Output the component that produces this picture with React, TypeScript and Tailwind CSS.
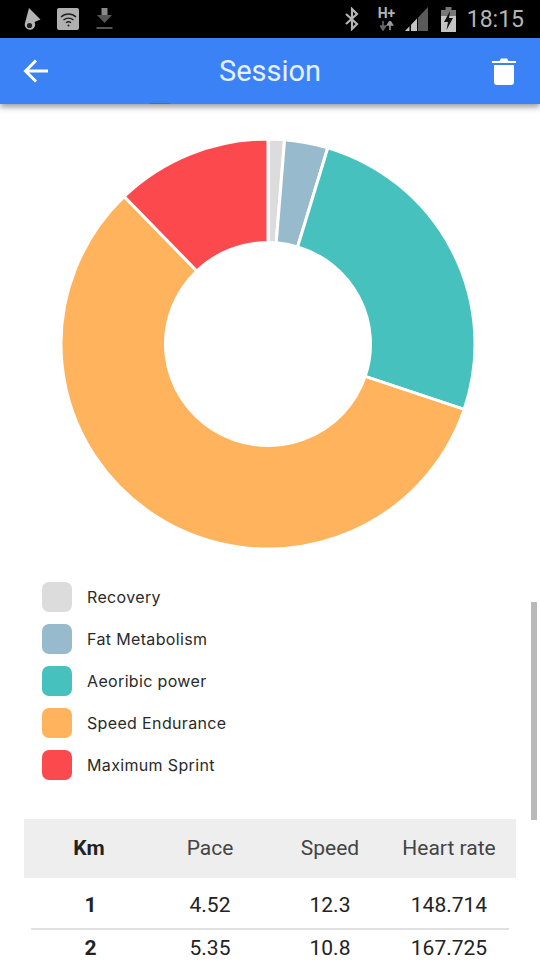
import React from 'react';

const CX = 207;
const CY = 207;
const OUTER = 207;
const INNER = 102.5;

const zones = [
  { name: 'Recovery', color: '#dcdcdc', from: 0, to: 4.6 },
  { name: 'Fat Metabolism', color: '#98bacd', from: 4.6, to: 16.8 },
  { name: 'Aeoribic power', color: '#47c1be', from: 16.8, to: 108.6 },
  { name: 'Speed Endurance', color: '#ffb35c', from: 108.6, to: 316 },
  { name: 'Maximum Sprint', color: '#fc494e', from: 316, to: 360 },
];

const laps = [
  { km: '1', pace: '4.52', speed: '12.3', heart: '148.714' },
  { km: '2', pace: '5.35', speed: '10.8', heart: '167.725' },
];

const point = (r: number, deg: number) => {
  const a = (deg * Math.PI) / 180;
  return `${CX + r * Math.sin(a)} ${CY - r * Math.cos(a)}`;
};

const slicePath = (from: number, to: number) => {
  const large = to - from > 180 ? 1 : 0;
  return `M${point(INNER, from)} L${point(OUTER, from)} A${OUTER} ${OUTER} 0 ${large} 1 ${point(OUTER, to)} L${point(INNER, to)} A${INNER} ${INNER} 0 ${large} 0 ${point(INNER, from)} Z`;
};

const StatusBar: React.FC = () => (
  <div className="h-[38px] bg-black flex items-center pl-[24px] pr-[16px] shrink-0">
    <svg width="17" height="23" viewBox="0 0 17 23" className="mr-[16px]">
      <path d="M5 0 L16.5 11.5 L10.5 14 A5.2 5.2 0 1 1 1 15 Z" fill="#b5b5b5" />
      <circle cx="5.5" cy="17.5" r="2.6" fill="#222" />
    </svg>
    <div className="w-[22px] h-[22px] bg-[#b0b0b0] rounded-[2px] mr-[17px] flex items-center justify-center">
      <svg width="17" height="15" viewBox="0 0 17 15" fill="none" stroke="#222" strokeWidth="1.4">
        <path d="M1 5 A11 11 0 0 1 16 5" />
        <path d="M3.5 8 A7.5 7.5 0 0 1 13.5 8" />
        <path d="M6 10.8 A4 4 0 0 1 11 10.8" />
        <circle cx="8.5" cy="13.5" r="1" fill="#222" stroke="none" />
      </svg>
    </div>
    <svg width="17" height="22" viewBox="0 0 17 22">
      <path d="M5.5 0 H11.5 V7 H5.5 Z" fill="#8a8a8a" />
      <path d="M1 7 H16 L8.5 15 Z" fill="#555" />
      <rect x="0.5" y="19" width="16" height="2" fill="#555" />
    </svg>
    <div className="flex-1" />
    <svg width="16" height="24" viewBox="0 0 16 24" fill="none" stroke="#b5b5b5" strokeWidth="2.2" className="mr-[18px]">
      <path d="M2 7 L13 17 L8 22 V2 L13 7 L2 17" />
    </svg>
    <div className="relative w-[19px] h-[26px] mr-[8px]">
      <span className="absolute left-0 top-[-1px] text-[14px] leading-[16px] font-bold text-[#b5b5b5] font-['Roboto',sans-serif]">H+</span>
      <svg width="14" height="10" viewBox="0 0 14 10" className="absolute left-[2px] top-[15px]">
        <path d="M3 0 V6 M0.5 5 L3 9 L5.5 5 Z" stroke="#666" strokeWidth="1.6" fill="#666" />
        <path d="M10 9 V3 M7.5 4 L10 0 L12.5 4 Z" stroke="#999" strokeWidth="1.6" fill="#999" />
      </svg>
    </div>
    <svg width="23" height="24" viewBox="0 0 23 24" className="mr-[13px]">
      <path d="M0 24 L4.5 19.3 V24 Z" fill="#c4c4c4" />
      <path d="M6 17.7 L12 11.5 V24 H6 Z" fill="#c4c4c4" />
      <path d="M13 10.4 L23 0 V24 H13 Z" fill="#5a5a5a" />
    </svg>
    <svg width="15" height="25" viewBox="0 0 15 25" className="mr-[11px]">
      <rect x="4.5" y="0" width="6" height="3" fill="#777" />
      <rect x="0" y="3" width="15" height="6" fill="#777" />
      <rect x="0" y="9" width="15" height="16" fill="#c4c4c4" />
      <path d="M9 4 L3 15 H7 L5.5 23 L12 11 H8 Z" fill="#111" />
    </svg>
    <span className="text-[23px] leading-none text-[#b5b5b5] font-['Roboto',sans-serif]">18:15</span>
  </div>
);

const AppBar: React.FC = () => (
  <div className="relative z-10 h-[66px] bg-[#3b82f6] flex items-center justify-between pl-[23px] pr-[24px] shadow-[0_3px_6px_rgba(0,0,0,0.4)] shrink-0">
    <svg width="25" height="24" viewBox="0 0 25 24" fill="none" stroke="white" strokeWidth="3">
      <path d="M25 12 H3 M13 1.5 L2.5 12 L13 22.5" />
    </svg>
    <h1 className="text-[29px] leading-none font-normal text-[#e6f0ff]">Session</h1>
    <svg width="24" height="28" viewBox="0 0 24 28" fill="white">
      <path d="M0 4 H7.5 L9 1.5 H15 L16.5 4 H24 V6 H0 Z" />
      <path d="M2 8 H22 V25 A3 3 0 0 1 19 28 H5 A3 3 0 0 1 2 25 Z" />
    </svg>
    <div className="absolute left-[150px] bottom-0 w-[20px] h-[1px] bg-[#3a6fc4]" />
  </div>
);

const Donut: React.FC = () => (
  <div className="pl-[61px] pt-[35px]">
    <svg width="414" height="410" viewBox="0 0 414 414" preserveAspectRatio="none" className="block">
      {zones.map((zone) => (
        <path key={zone.name} d={slicePath(zone.from, zone.to)} fill={zone.color} stroke="white" strokeWidth="3" />
      ))}
    </svg>
  </div>
);

const Legend: React.FC = () => (
  <div className="pl-[42px] pt-[33px] flex flex-col gap-[12px] font-['Inter',sans-serif]">
    {zones.map((zone) => (
      <div key={zone.name} className="flex items-center h-[30px]">
        <div className="w-[30px] h-[30px] rounded-[7px]" style={{ backgroundColor: zone.color }} />
        <span className="ml-[15px] text-[16px] tracking-[0.35px] text-[#2a2a2a]">{zone.name}</span>
      </div>
    ))}
  </div>
);

const LapTable: React.FC = () => (
  <div className="mx-[24px] mt-[39px] text-[21px] text-[#222]">
    <div className="grid grid-cols-[130px_112px_128px_110px] h-[59px] items-center bg-[#eeeeee] text-center">
      <div className="font-bold">Km</div>
      <div className="text-[#444]">Pace</div>
      <div className="text-[#444]">Speed</div>
      <div className="text-[#444] whitespace-nowrap">Heart rate</div>
    </div>
    {laps.map((lap, i) => (
      <div key={lap.km} className={`mx-[7px] ${i === 0 ? 'border-b-2 border-[#e0e0e0] h-[52px] pt-[5px]' : 'h-[38px]'}`}>
        <div className="grid grid-cols-[119px_120px_120px_118px] h-full items-center text-center">
          <div className="font-bold">{lap.km}</div>
          <div>{lap.pace}</div>
          <div>{lap.speed}</div>
          <div>{lap.heart}</div>
        </div>
      </div>
    ))}
  </div>
);

const App: React.FC = () => (
  <div className="w-[540px] h-[960px] overflow-hidden bg-white flex flex-col font-['Roboto',sans-serif]">
    <StatusBar />
    <AppBar />
    <div className="relative flex-1 overflow-hidden">
      <Donut />
      <Legend />
      <LapTable />
      <div className="absolute right-[3px] top-[498px] w-[6px] h-[218px] bg-[#b9b9b9]" />
    </div>
  </div>
);

export default App;
